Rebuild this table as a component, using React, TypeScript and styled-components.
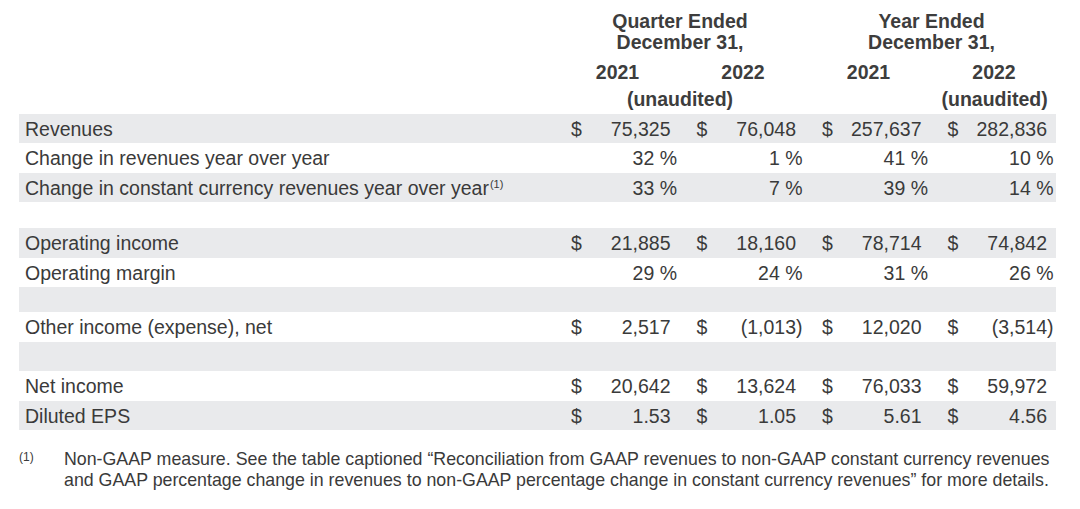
import styled, { createGlobalStyle } from "styled-components";

const GlobalStyle = createGlobalStyle`
  html, body {
    margin: 0;
    padding: 0;
    background: #ffffff;
  }
  body {
    font-family: "Liberation Sans", Arial, Helvetica, sans-serif;
    color: #3a3a3a;
  }
`;

const COLUMNS = "546px 125.5px 125.5px 125.5px 114.5px";

type Row = {
  label?: string;
  note?: boolean;
  dollar?: boolean;
  values?: string[];
  shaded: boolean;
  height: number;
};

const rows: Row[] = [
  { label: "Revenues", dollar: true, values: ["75,325", "76,048", "257,637", "282,836"], shaded: true, height: 29.5 },
  { label: "Change in revenues year over year", values: ["32 %", "1 %", "41 %", "10 %"], shaded: false, height: 29.5 },
  {
    label: "Change in constant currency revenues year over year",
    note: true,
    values: ["33 %", "7 %", "39 %", "14 %"],
    shaded: true,
    height: 29.5,
  },
  { shaded: false, height: 26 },
  { label: "Operating income", dollar: true, values: ["21,885", "18,160", "78,714", "74,842"], shaded: true, height: 29.5 },
  { label: "Operating margin", values: ["29 %", "24 %", "31 %", "26 %"], shaded: false, height: 29.5 },
  { shaded: true, height: 25 },
  { label: "Other income (expense), net", dollar: true, values: ["2,517", "(1,013)", "12,020", "(3,514)"], shaded: false, height: 29.5 },
  { shaded: true, height: 29.5 },
  { label: "Net income", dollar: true, values: ["20,642", "13,624", "76,033", "59,972"], shaded: false, height: 29.5 },
  { label: "Diluted EPS", dollar: true, values: ["1.53", "1.05", "5.61", "4.56"], shaded: true, height: 29.5 },
];

const hangs = (v: string) => v.endsWith(")") || v.endsWith("%");

const App = () => {
  return (
    <Page>
      <GlobalStyle />
      <Header>
        <Title $col="2 / 4" $pad={21}>
          Quarter Ended
          <br />
          December 31,
        </Title>
        <Title $col="4 / 6" $pad={9}>
          Year Ended
          <br />
          December 31,
        </Title>
        {["2021", "2022", "2021", "2022"].map((y, i) => (
          <Year key={i} $col={`${i + 2}`} $pad={i === 3 ? 9.5 : 20.5}>
            {y}
          </Year>
        ))}
        <Unaudited $col="2 / 4" $pad={21}>
          (unaudited)
        </Unaudited>
        <Unaudited $col="5" $pad={9.5}>
          (unaudited)
        </Unaudited>
      </Header>

      <Table>
        {rows.map((row, i) => (
          <TableRow key={i} $shaded={row.shaded} $height={row.height}>
            <Label>
              {row.label}
              {row.note && <Sup>(1)</Sup>}
            </Label>
            {row.values?.map((v, j) => (
              <Group key={j} $last={j === 3}>
                <Dollar>{row.dollar ? "$" : ""}</Dollar>
                <Value $hang={hangs(v)}>{v}</Value>
              </Group>
            ))}
          </TableRow>
        ))}
      </Table>

      <Footnote>
        <Marker>(1)</Marker>
        <NoteText>
          Non-GAAP measure. See the table captioned “Reconciliation from GAAP revenues to non-GAAP constant currency
          revenues
          <br />
          and GAAP percentage change in revenues to non-GAAP percentage change in constant currency revenues” for more
          details.
        </NoteText>
      </Footnote>
    </Page>
  );
};

export default App;

const Page = styled.div`
  width: 1037px;
  padding-left: 19px;
`;

const Header = styled.div`
  display: grid;
  grid-template-columns: ${COLUMNS};
  grid-template-rows: auto auto auto;
  padding-bottom: 4.3px;
  font-weight: 700;
  font-size: 19.5px;
  color: #3d3d3d;
  white-space: nowrap;
`;

const Title = styled.div<{ $col: string; $pad: number }>`
  grid-row: 1;
  grid-column: ${(p) => p.$col};
  padding-top: 11px;
  padding-right: ${(p) => p.$pad}px;
  line-height: 21px;
  text-align: center;
`;

const Year = styled.div<{ $col: string; $pad: number }>`
  grid-row: 2;
  grid-column: ${(p) => p.$col};
  margin-top: 7.7px;
  padding-right: ${(p) => p.$pad}px;
  line-height: 22px;
  text-align: center;
`;

const Unaudited = styled.div<{ $col: string; $pad: number }>`
  grid-row: 3;
  grid-column: ${(p) => p.$col};
  margin-top: 5px;
  padding-right: ${(p) => p.$pad}px;
  line-height: 22px;
  text-align: center;
`;

const Table = styled.div`
  display: flex;
  flex-direction: column;
  font-size: 19.5px;
`;

const TableRow = styled.div<{ $shaded: boolean; $height: number }>`
  display: grid;
  grid-template-columns: ${COLUMNS};
  height: ${(p) => p.$height}px;
  line-height: ${(p) => p.$height + 2}px;
  background-color: ${(p) => (p.$shaded ? "#e9eaec" : "#ffffff")};
  white-space: nowrap;
`;

const Label = styled.div`
  padding-left: 6px;
`;

const Sup = styled.span`
  font-size: 11px;
  line-height: 0;
  vertical-align: 7px;
  margin-left: 1px;
`;

const Group = styled.div<{ $last: boolean }>`
  display: flex;
  justify-content: space-between;
  padding-left: 6px;
  padding-right: ${(p) => (p.$last ? 2.5 : 13.5)}px;
`;

const Dollar = styled.span``;

const Value = styled.span<{ $hang: boolean }>`
  padding-right: ${(p) => (p.$hang ? 0 : 6.5)}px;
`;

const Footnote = styled.div`
  display: flex;
  align-items: flex-start;
  margin-top: 19px;
  color: #3a3a3a;
`;

const Marker = styled.div`
  width: 45px;
  flex-shrink: 0;
  font-size: 12px;
  line-height: 14px;
  padding-top: 1px;
`;

const NoteText = styled.div`
  font-size: 17.8px;
  line-height: 21px;
  white-space: nowrap;
`;
